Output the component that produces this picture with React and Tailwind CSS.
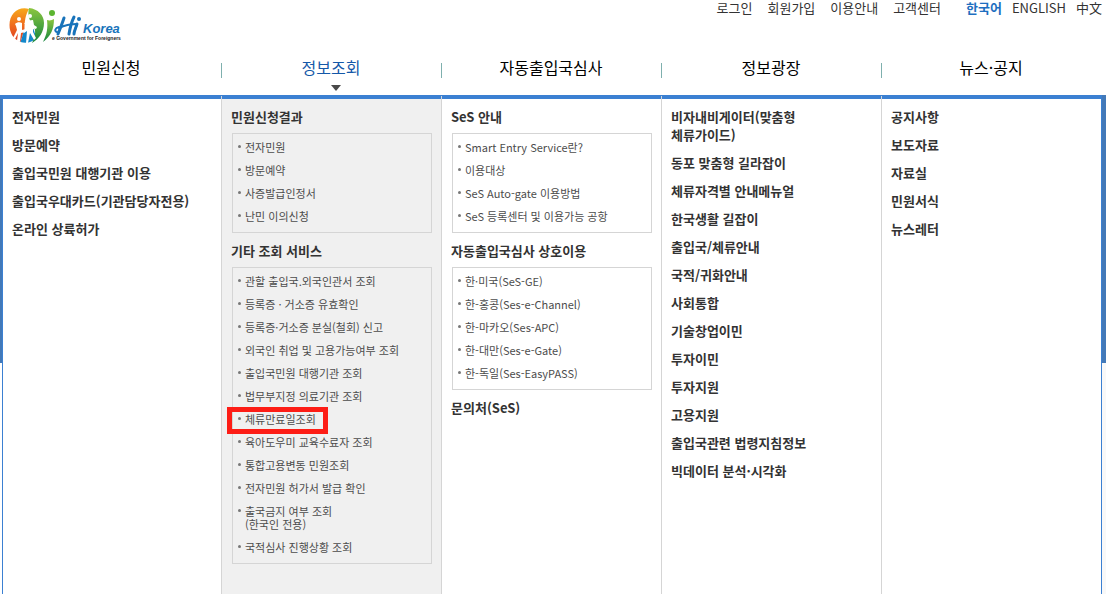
import React from 'react';

const userLinks = ['로그인', '회원가입', '이용안내', '고객센터'];

const menus = [
  {
    title: '민원신청',
    groups: [
      { title: '전자민원' },
      { title: '방문예약' },
      { title: '출입국민원 대행기관 이용' },
      { title: '출입국우대카드(기관담당자전용)' },
      { title: '온라인 상륙허가' },
    ],
  },
  {
    title: '정보조회',
    active: true,
    groups: [
      { title: '민원신청결과', items: ['전자민원', '방문예약', '사증발급인정서', '난민 이의신청'] },
      {
        title: '기타 조회 서비스',
        items: [
          '관할 출입국.외국인관서 조회',
          '등록증 · 거소증 유효확인',
          '등록증·거소증 분실(철회) 신고',
          '외국인 취업 및 고용가능여부 조회',
          '출입국민원 대행기관 조회',
          '법무부지정 의료기관 조회',
          '체류만료일조회',
          '육아도우미 교육수료자 조회',
          '통합고용변동 민원조회',
          '전자민원 허가서 발급 확인',
          '출국금지 여부 조회\n(한국인 전용)',
          '국적심사 진행상황 조회',
        ],
      },
    ],
  },
  {
    title: '자동출입국심사',
    groups: [
      {
        title: 'SeS 안내',
        items: ['Smart Entry Service란?', '이용대상', 'SeS Auto-gate 이용방법', 'SeS 등록센터 및 이용가능 공항'],
      },
      {
        title: '자동출입국심사 상호이용',
        items: [
          '한·미국(SeS-GE)',
          '한-홍콩(Ses-e-Channel)',
          '한-마카오(Ses-APC)',
          '한-대만(Ses-e-Gate)',
          '한-독일(Ses-EasyPASS)',
        ],
      },
      { title: '문의처(SeS)' },
    ],
  },
  {
    title: '정보광장',
    groups: [
      { title: '비자내비게이터(맞춤형\n체류가이드)' },
      { title: '동포 맞춤형 길라잡이' },
      { title: '체류자격별 안내메뉴얼' },
      { title: '한국생활 길잡이' },
      { title: '출입국/체류안내' },
      { title: '국적/귀화안내' },
      { title: '사회통합' },
      { title: '기술창업이민' },
      { title: '투자이민' },
      { title: '투자지원' },
      { title: '고용지원' },
      { title: '출입국관련 법령지침정보' },
      { title: '빅데이터 분석·시각화' },
    ],
  },
  {
    title: '뉴스·공지',
    groups: [
      { title: '공지사항' },
      { title: '보도자료' },
      { title: '자료실' },
      { title: '민원서식' },
      { title: '뉴스레터' },
    ],
  },
];

const HIGHLIGHTED = '체류만료일조회';

function Logo() {
  return (
    <svg width="120" height="42" viewBox="0 0 120 42" role="img" aria-label="Hi Korea e-Government for Foreigners">
      <defs>
        <linearGradient id="orange" x1="0" y1="0" x2="0" y2="1">
          <stop offset="0" stopColor="#f7a81b" />
          <stop offset="0.5" stopColor="#ef6c1f" />
          <stop offset="1" stopColor="#dd3a22" />
        </linearGradient>
        <linearGradient id="green" x1="0" y1="0" x2="0" y2="1">
          <stop offset="0" stopColor="#8cc63f" />
          <stop offset="1" stopColor="#12853f" />
        </linearGradient>
      </defs>
      <path d="M21 5C10 2 1.500 10 1.500 21c0 8 4 14 11 17l4-13c0-8 1-14 4.500-20z" fill="url(#orange)" />
      <path d="M12.500 38c6 2 12 0 16-4l-3-9h-9z" fill="#1488c9" />
      <path d="M21 4c9 1 15 7 15 15 0 9-5 16-12 20 4-8 4-13 1-18-3-4-6-9-4-17z" fill="url(#green)" />
      <path d="M39 16c3 1 5 0 7-1 0 10-3 17-11 23 4-8 5-14 4-22z" fill="url(#green)" />
      <circle cx="44" cy="9" r="3" fill="#5cb531" />
      <g fill="#fff">
        <circle cx="11" cy="15" r="2" />
        <path d="M7 20c2-2 5-2 7-1l0 7 4-1-1 3-4 1-1 9-3-1 1-8-3 6-2-1 4-8-1-4z" />
        <circle cx="22" cy="12" r="2" />
        <path d="M16 20c3-3 6-4 9-4l1 5 3 2-1 2-3-1 0 4 3 6-2 2-4-7-2 10h-2l1-12-3 2-1-2 4-4-1-3z" />
      </g>
      {/* brush lettering */}
      <g fill="none" stroke="#1873ba" strokeLinecap="round" strokeLinejoin="round">
        <path d="M56 14c-2 6-4 11-6 16M66 13c-3 6-4 11-5 17" strokeWidth="3" />
        <path d="M51 23c-4 1-5 4-2 5M51 24c6-3 12-4 18-4-1 4-3 7-3 10" strokeWidth="2" />
        <path d="M69 20c-1 4-3 7-3 10" strokeWidth="3" />
      </g>
      <circle cx="71" cy="15" r="2" fill="#1873ba" />
      <text x="75" y="29" fontSize="13" fontWeight="700" fontStyle="italic" fill="#1873ba" className="font-['Liberation_Sans']">
        Korea
      </text>
      <text x="44" y="36" fontSize="5" fontWeight="700" fill="#222" className="font-['Liberation_Sans']">
        e Government for Foreigners
      </text>
    </svg>
  );
}

function MenuItem({ label }) {
  return (
    <li className="relative flex w-fit gap-1">
      <span className="mt-1 h-[3px] w-[3px] shrink-0 rounded-full bg-[#777]" />
      <a href="#" className="whitespace-pre-line text-[11px] leading-[13px] text-[#4c4c4c]">
        {label}
      </a>
      {label === HIGHLIGHTED && (
        <span className="pointer-events-none absolute -top-1.5 -right-3 -bottom-2 -left-[11px] border-5 border-[#fd1d16]" />
      )}
    </li>
  );
}

function MenuGroup({ title, items }) {
  return (
    <div>
      <a href="#" className="block whitespace-pre-line text-[13px] leading-[18px] font-bold text-[#333]">
        {title}
      </a>
      {items && (
        <ul className="mt-[7px] -mb-px ml-px flex flex-col gap-2.5 border border-[#d5d5d5] pt-[7px] pr-1 pb-[9px] pl-[5px]">
          {items.map((item) => (
            <MenuItem key={item} label={item} />
          ))}
        </ul>
      )}
    </div>
  );
}

export default function App() {
  return (
    <div className="flex min-h-screen flex-col bg-white font-['Noto_Sans_CJK_KR',sans-serif]" lang="ko">
      {/* Logo and utility links */}
      <header className="flex h-12 items-start justify-between pr-1 pl-2">
        <a href="#" className="mt-1">
          <Logo />
        </a>
        <div className="flex text-[13px] leading-4 text-[#333]">
          <ul className="flex gap-[15px]">
            {userLinks.map((link) => (
              <li key={link}>
                <a href="#">{link}</a>
              </li>
            ))}
          </ul>
          <ul className="ml-[25px] flex gap-2.5">
            <li><a href="#" className="font-bold text-[#1f6fc0]">한국어</a></li>
            <li><a href="#">ENGLISH</a></li>
            <li><a href="#">中文</a></li>
          </ul>
        </div>
      </header>

      {/* Main menu */}
      <nav className="grid h-[47px] grid-cols-5 pr-[5px] pl-px">
        {menus.map((menu, index) => (
          <div key={menu.title} className="relative flex justify-center pt-[7px]">
            {index > 0 && <span className="absolute top-[15px] left-0 h-[15px] w-px bg-[#7fb0ae]" />}
            <a
              href="#"
              className={`text-base leading-6 ${menu.active ? 'text-[#1558a8]' : 'text-black'}`}
            >
              {menu.title}
            </a>
            {menu.active && (
              <svg className="absolute top-[37px] ml-2.5" width="10" height="6" viewBox="0 0 10 6">
                <path d="M0 0h10L5 6z" fill="#4a4a4a" />
              </svg>
            )}
          </div>
        ))}
      </nav>

      {/* Expanded sub menus */}
      <div className="mr-1 h-1 bg-[#3b80d2]" />
      <div className="flex flex-1">
        <div className="w-0.5">
          <div className="h-[264px] bg-[#4379b8]" />
        </div>
        <div className="grid flex-1 grid-cols-[218fr_220fr_220fr_220fr_220fr] border-x border-[#3b80d2]">
          {menus.map((menu, index) => (
            <section
              key={menu.title}
              className={`-mt-[3px] flex pt-[3px] ${index > 0 ? 'border-l border-[#d5d5d5]' : ''}`}
            >
              <div
                className={`flex flex-1 flex-col gap-2.5 px-[9px] pt-[9px] ${menu.active ? 'bg-[#f0f0f0]' : ''}`}
              >
                {menu.groups.map((group) => (
                  <MenuGroup key={group.title} title={group.title} items={group.items} />
                ))}
              </div>
            </section>
          ))}
        </div>
        <div className="-mt-1 w-1 bg-[#f8f8f8]">
          <div className="h-[268px] bg-[#4379b8]" />
        </div>
      </div>
    </div>
  );
}
